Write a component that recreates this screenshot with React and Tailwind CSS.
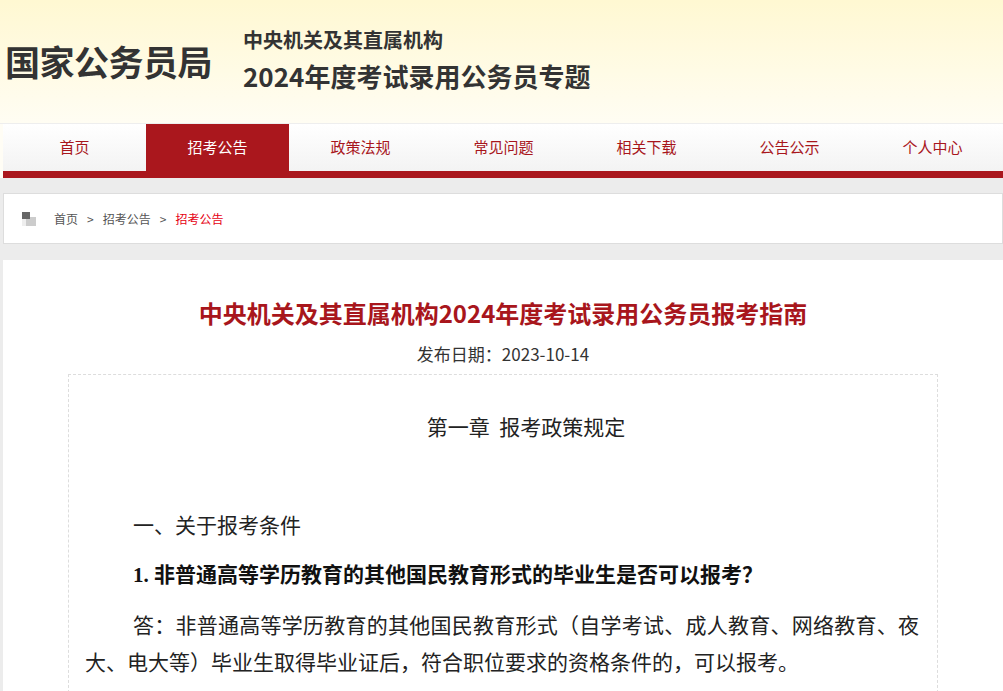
const cjk = { fontFamily: '"Noto Sans CJK SC", "Noto Sans", sans-serif' };

const navItems = ["首页", "招考公告", "政策法规", "常见问题", "相关下载", "公告公示", "个人中心"];

function Header() {
  return (
    <div className="h-[124px] bg-gradient-to-b from-[#fff8d2] to-[#fffdf3] border-b border-[#eeeeee]">
      <div className="h-[123px] flex items-center pb-[3px] pl-[5px]">
        <div className="text-[35px] font-bold text-[#333] leading-none tracking-[-0.5px]">国家公务员局</div>
        <div className="ml-[31px] flex flex-col gap-[8px]">
          <div className="text-[20px] leading-[24px] font-bold text-[#333]">中央机关及其直属机构</div>
          <div className="text-[26px] leading-[32px] font-bold text-[#333]">2024年度考试录用公务员专题</div>
        </div>
      </div>
    </div>
  );
}

function Nav() {
  return (
    <div className="bg-[#fffdf5] pl-[3px]">
      <div className="flex h-[47px] bg-gradient-to-b from-white to-[#f3f3f3]">
        {navItems.map((item, i) => (
          <div
            key={item}
            className={
              i === 1
                ? "w-[143px] shrink-0 flex items-center justify-center text-[15px] text-white bg-[#aa171d]"
                : "w-[143px] shrink-0 flex items-center justify-center text-[15px] text-[#a8161c]"
            }
          >
            {item}
          </div>
        ))}
      </div>
      <div className="h-[7px] bg-[#aa171d]" />
    </div>
  );
}

function CrumbIcon() {
  return (
    <svg width="14" height="14" viewBox="0 0 14 14">
      <rect x="0" y="6" width="6" height="8" fill="#eeeeee" />
      <rect x="4" y="5" width="10" height="9" fill="#cccccc" />
      <rect x="0" y="0" width="8" height="7" fill="#666666" />
    </svg>
  );
}

function Breadcrumb() {
  return (
    <div className="h-[51px] bg-white border border-[#dddddd] flex items-center pl-[18px] text-[12px] text-[#555]">
      <CrumbIcon />
      <span className="ml-[18px]">首页</span>
      <span className="mx-[9px]">&gt;</span>
      <span>招考公告</span>
      <span className="mx-[9px]">&gt;</span>
      <span className="text-[#e60012]">招考公告</span>
    </div>
  );
}

function Article() {
  return (
    <div className="bg-white pb-[40px]">
      <h1 className="pt-[37px] text-center text-[24px] leading-[32px] font-bold text-[#a8161c]">
        中央机关及其直属机构2024年度考试录用公务员报考指南
      </h1>
      <div className="mt-[13px] text-center text-[17px] leading-[24px] text-[#333]">发布日期：2023-10-14</div>
      <div className="mt-[8px] ml-[65px] w-[870px] border border-dashed border-[#dddddd] pt-[33px] pl-[16px] pr-[18px] text-[21px] leading-[37px] text-[#222]">
        <p className="indent-[48px] text-center mb-[12px]">第一章&nbsp;&nbsp;报考政策规定</p>
        <p className="indent-[48px] mb-[12px]">&nbsp;</p>
        <p className="indent-[48px] mb-[12px]">一、关于报考条件</p>
        <p className="indent-[48px] mb-[12px] font-bold text-[#111]">
          <span style={{ fontFamily: '"Liberation Serif", serif' }}>1. </span>
          非普通高等学历教育的其他国民教育形式的毕业生是否可以报考？
        </p>
        <p className="indent-[48px] mb-[12px] text-justify">
          答：非普通高等学历教育的其他国民教育形式（自学考试、成人教育、网络教育、夜大、电大等）毕业生取得毕业证后，符合职位要求的资格条件的，可以报考。
        </p>
      </div>
    </div>
  );
}

export default function App() {
  return (
    <div className="min-h-screen bg-[#ececec]" style={cjk}>
      <Header />
      <Nav />
      <div className="pl-[3px] w-[1003px]">
        <div className="w-[1000px] mt-[15px]">
          <Breadcrumb />
        </div>
        <div className="mt-[16px]">
          <Article />
        </div>
      </div>
    </div>
  );
}
